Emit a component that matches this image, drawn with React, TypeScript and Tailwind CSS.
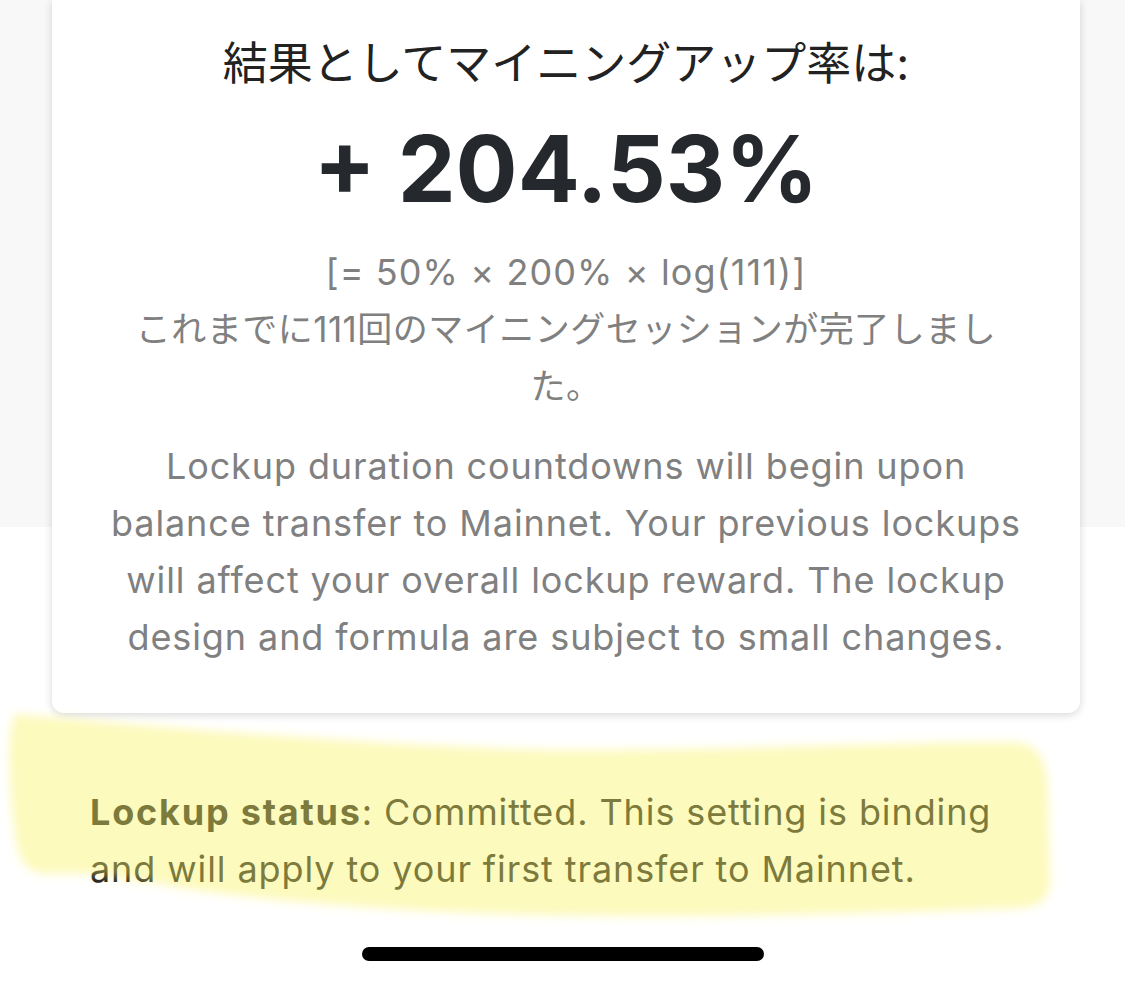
const FONT = "font-['Inter','Noto_Sans_CJK_JP',sans-serif]"

function Highlighter() {
  return (
    <svg
      className="pointer-events-none absolute left-0 top-0"
      width="1125"
      height="987"
      viewBox="0 0 1125 987"
    >
      <defs>
        <filter id="soft" x="-10%" y="-10%" width="120%" height="120%">
          <feGaussianBlur stdDeviation="5" />
        </filter>
      </defs>
      <path
        d="M 14 714 C 150 726 400 748 560 750 C 750 750 900 742 1010 742 C 1040 742 1048 760 1048 800 L 1050 880 C 1050 900 1040 906 1020 908 C 850 915 650 918 540 915 C 400 912 250 900 170 886 C 120 878 90 872 50 874 C 25 874 18 860 14 830 C 10 790 6 740 14 714 Z"
        fill="#fbf462"
        fillOpacity="0.42"
        filter="url(#soft)"
      />
    </svg>
  )
}

export default function App() {
  return (
    <div
      className={`relative h-[987px] w-[1125px] overflow-hidden bg-[linear-gradient(to_bottom,#f8f8f8_527px,#ffffff_527px)] ${FONT}`}
    >
      {/* summary card */}
      <div className="ml-[52px] w-[1028px] rounded-b-[12px] bg-white pt-[35px] pb-[47px] text-center shadow-[0_2px_8px_rgba(0,0,0,0.16)]">
        <div className="text-[45px] leading-[58px] text-[#222222]">
          結果としてマイニングアップ率は:
        </div>
        <div className="mt-[21px] text-[92px] font-bold leading-[110px] text-[#25282c]">
          + 204.53%
        </div>
        <div className="mt-[20px] text-[36px] leading-[57px] tracking-[1.1px] text-[#808080]">
          [= 50% × 200% × log(111)]
        </div>
        <div className="text-[35px] leading-[57px] tracking-[0.5px] text-[#808080]">
          これまでに111回のマイニングセッションが完了しまし
          <br />
          た。
        </div>
        <p className="mt-[23px] text-[36px] leading-[57px] tracking-[0.9px] text-[#808080]">
          Lockup duration countdowns will begin upon
          <br />
          balance transfer to Mainnet. Your previous lockups
          <br />
          will affect your overall lockup reward. The lockup
          <br />
          design and formula are subject to small changes.
        </p>
      </div>

      <p className="ml-[90px] mt-[71px] text-[36px] leading-[57px] tracking-[0.9px] text-[#222222]">
        <span className="font-bold tracking-[1.8px]">Lockup status</span>: Committed. This setting is binding
        <br />
        and will apply to your first transfer to Mainnet.
      </p>

      <div className="mt-[49px] flex justify-center">
        <div className="h-[14px] w-[402px] rounded-full bg-black" />
      </div>

      <Highlighter />
    </div>
  )
}
